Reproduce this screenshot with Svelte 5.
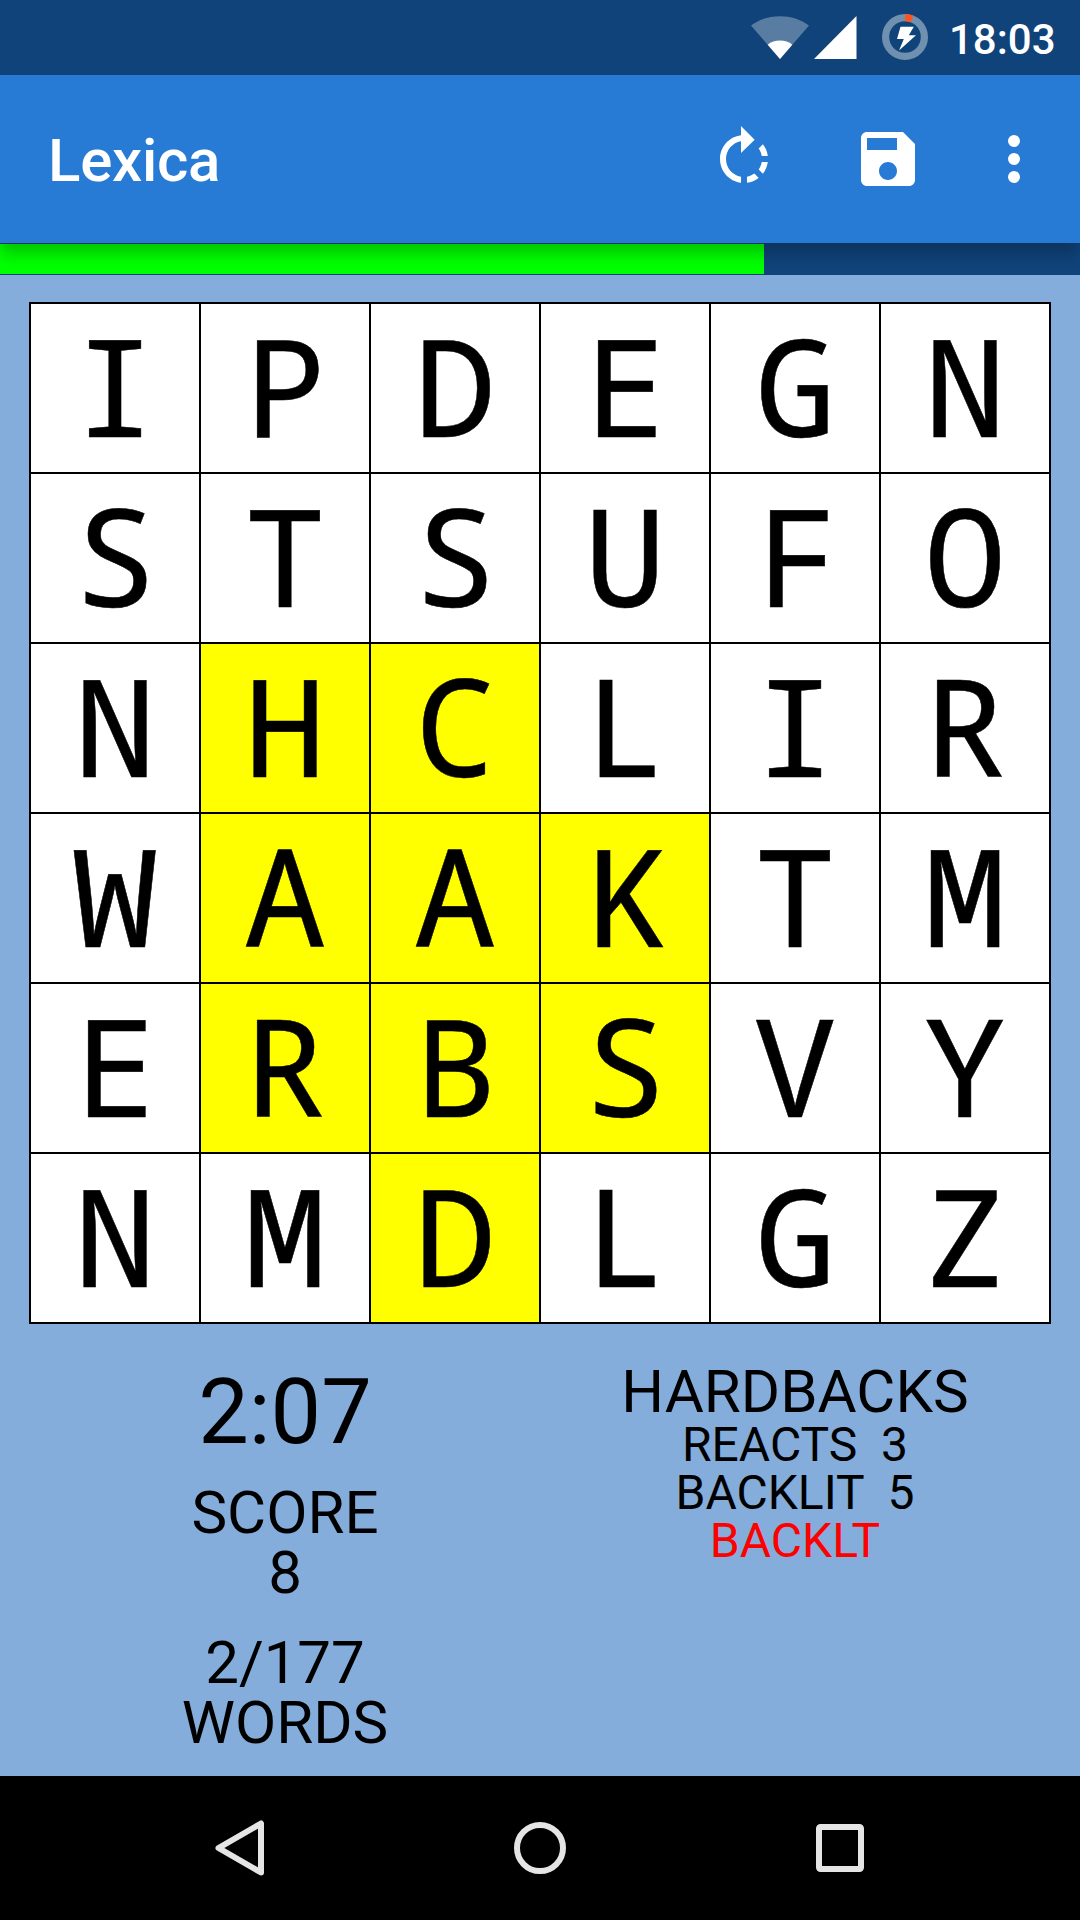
<script>
  const rows = ['IPDEGN', 'STSUFO', 'NHCLIR', 'WAAKTM', 'ERBSVY', 'NMDLGZ'];
  const marked = new Set(['2-1', '2-2', '3-1', '3-2', '3-3', '4-1', '4-2', '4-3', '5-2']);
  // Optical adjustments for letters that look off-centre or narrow in their tile.
  const tune = {
    K: 'translateX(4px)',
    F: 'translateX(3px)',
    E: 'translateX(1px)',
    G: 'translateX(1px)',
    W: 'scaleX(1.09)',
    A: 'scaleX(1.02)',
    V: 'scaleX(1.03)',
    Y: 'scaleX(1.06)',
    Z: 'scaleX(1.13)'
  };
  const progress = 764 / 1080;
  const found = [
    { word: 'REACTS', points: 3 },
    { word: 'BACKLIT', points: 5 }
  ];
</script>

<div class="screen">
  <div class="status">
    <svg class="wifi" width="58" height="43" viewBox="0 0 58 43">
      <path d="M29 43 L0 9.5 C16-3 42-3 58 9.5Z" fill="#587ca2" />
      <path d="M29 43 L16.7 28.7 C23 23.2 35 23.2 41.3 28.7Z" fill="#fff" />
    </svg>
    <svg class="signal" width="43" height="43" viewBox="0 0 43 43">
      <path d="M0 43 L42.5 0 V43Z" fill="#fff" />
    </svg>
    <svg class="battery" width="46" height="46" viewBox="0 0 46 46">
      <circle cx="23" cy="23" r="19.4" fill="none" stroke="#7090b0" stroke-width="7.2" />
      <path d="M23 0 A23 23 0 0 1 31.4 1.6 L29 8.3 A16 16 0 0 0 23 7.2Z" fill="#ff5420" />
      <path d="M18.5 12.8H31.8L26.8 21.3H34L17 36.4L21.8 25H15Z" fill="#fff" />
    </svg>
    <span class="clock">18:03</span>
  </div>

  <header>
    <h1>Lexica</h1>
    <svg class="icon rotate" viewBox="0 0 24 24">
      <path d="M15.55 5.55L11 1v3.07C7.06 4.56 4 7.92 4 12s3.05 7.44 7 7.93v-2.02c-2.84-.48-5-2.94-5-5.91s2.16-5.43 5-5.91V10l4.55-4.45zM19.93 11c-.17-1.39-.72-2.73-1.62-3.89l-1.42 1.42c.54.75.88 1.6 1.02 2.47h2.02zM13 17.9v2.02c1.39-.17 2.74-.71 3.9-1.61l-1.44-1.44c-.75.54-1.59.89-2.46 1.03zm3.89-2.42l1.42 1.41c.9-1.16 1.45-2.5 1.62-3.89h-2.02c-.14.87-.48 1.72-1.02 2.48z" />
    </svg>
    <svg class="icon save" viewBox="0 0 24 24">
      <path d="M17 3H5c-1.11 0-2 .9-2 2v14c0 1.1.89 2 2 2h14c1.1 0 2-.9 2-2V7l-4-4zm-5 16c-1.66 0-3-1.34-3-3s1.34-3 3-3 3 1.34 3 3-1.34 3-3 3zm3-10H5V5h10v4z" />
    </svg>
    <svg class="icon more" viewBox="0 0 24 24">
      <circle cx="12" cy="6" r="2" /><circle cx="12" cy="12" r="2" /><circle cx="12" cy="18" r="2" />
    </svg>
  </header>

  <div class="progress"><div class="fill" style:width="{progress * 100}%"></div></div>

  <main>
    <div class="board">
      {#each rows as row, r}
        {#each row.split('') as letter, c}
          <div class="cell" class:marked={marked.has(`${r}-${c}`)}>
            <span class="letter" style:transform={tune[letter]}>{letter}</span>
          </div>
        {/each}
      {/each}
    </div>

    <div class="info">
      <section class="stats">
        <div class="time">2:07</div>
        <div class="stat">SCORE<br />8</div>
        <div class="stat">2/177<br />WORDS</div>
      </section>
      <section class="words">
        <div class="current">HARDBACKS</div>
        {#each found as f}
          <div class="word">{f.word}{'  '}{f.points}</div>
        {/each}
        <div class="word wrong">BACKLT</div>
      </section>
    </div>
  </main>

  <nav>
    <svg viewBox="0 0 72 72"><path d="M57 11.5V60.5L14.5 36Z" stroke-linejoin="round" /></svg>
    <svg viewBox="0 0 72 72"><circle cx="36" cy="36" r="23" /></svg>
    <svg viewBox="0 0 72 72"><rect x="15" y="15" width="42" height="42" rx="1.5" /></svg>
  </nav>
</div>

<style>
  :global(body) { margin: 0; background: #84addb; }
  .screen {
    width: 1080px;
    height: 1920px;
    display: flex;
    flex-direction: column;
    overflow: hidden;
    background: #84addb;
    color: #000;
    font-family: Roboto, sans-serif;
  }
  .status {
    height: 75px;
    flex: none;
    box-sizing: border-box;
    display: flex;
    justify-content: flex-end;
    padding-right: 25px;
    background: #10437a;
    color: #fff;
  }
  .wifi { margin-top: 16px; }
  .signal { margin: 16px 0 0 5px; }
  .battery { margin: 14px 0 0 25px; }
  .clock {
    width: 106px;
    margin-left: 21px;
    text-align: right;
    font-size: 42px;
    line-height: 80px;
    font-weight: 500;
  }
  header {
    height: 168px;
    flex: none;
    box-sizing: border-box;
    position: relative;
    z-index: 1;
    display: flex;
    align-items: center;
    padding: 0 30px 0 48px;
    background: #277bd5;
    box-shadow: 0 12px 14px -1px rgba(0, 0, 0, 0.22);
    color: #fff;
  }
  h1 {
    margin: 4px auto 0 0;
    font-size: 60px;
    line-height: 72px;
    font-weight: 500;
    letter-spacing: -0.25px;
  }
  .icon { width: 72px; height: 72px; fill: #fff; }
  .save { margin-left: 72px; }
  .more { margin-left: 54px; }
  .progress {
    height: 32px;
    flex: none;
    box-sizing: border-box;
    padding: 1px 0;
    background: #10437a;
  }
  .fill { height: 30px; background: #0f0; }
  main {
    flex: 1;
    min-height: 0;
    display: flex;
    flex-direction: column;
    align-items: center;
  }
  .board {
    margin-top: 27px;
    padding: 2px;
    display: grid;
    grid-template-columns: repeat(6, 168px);
    grid-auto-rows: 168px;
    gap: 2px;
    background: #000;
  }
  .cell {
    display: flex;
    justify-content: center;
    background: #fff;
    font-family: 'Noto Sans Mono', 'Droid Sans Mono', 'DejaVu Sans Mono', monospace;
    font-size: 136px;
    line-height: 162px;
  }
  .letter { -webkit-text-stroke: 0.5px #000; }
  .marked { background: #ff0; }
  .info {
    width: 1080px;
    display: grid;
    grid-template-columns: 570px 450px;
    text-align: center;
  }
  .stats { padding-top: 36px; }
  .time { font-size: 90px; line-height: 105px; margin-bottom: 18px; }
  .stat {
    font-size: 60px;
    line-height: 60px;
  }
  .stat + .stat { margin-top: 30px; }
  .words { padding-top: 38px; }
  .current { font-size: 60px; line-height: 60px; margin-bottom: -1px; }
  .word { font-size: 48px; line-height: 48px; white-space: pre; }
  .wrong { color: #f00; }
  nav {
    height: 144px;
    flex: none;
    display: flex;
    justify-content: center;
    align-items: center;
    gap: 228px;
    background: #000;
  }
  nav svg { width: 72px; height: 72px; fill: none; stroke: #e5e5e5; stroke-width: 6; }
</style>
